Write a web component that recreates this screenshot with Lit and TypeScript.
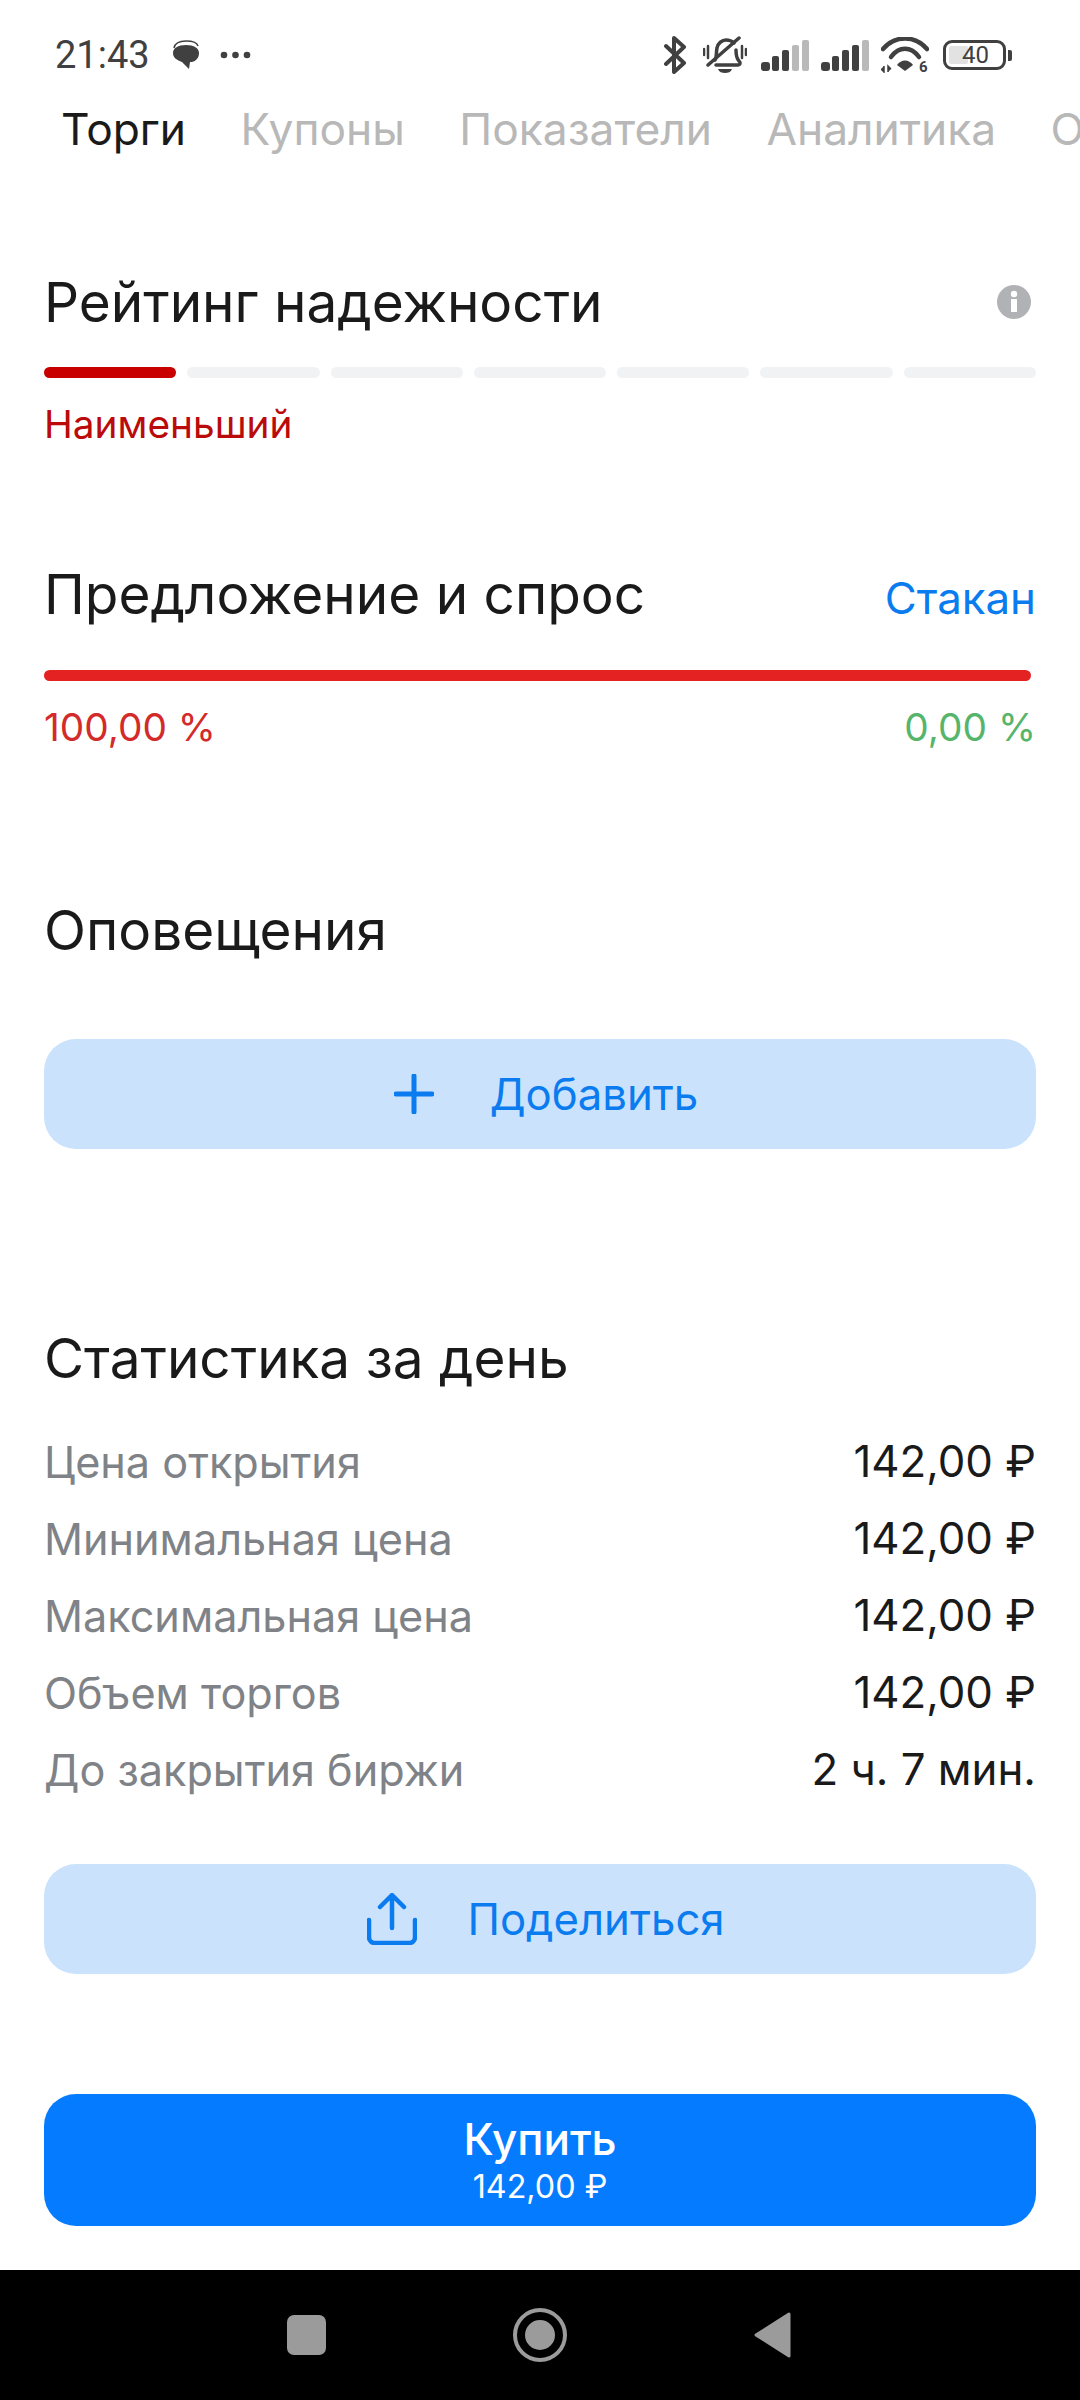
import { LitElement, html, css, svg } from "lit";
import { customElement } from "lit/decorators.js";

const stats = [
  ["Цена открытия", "142,00 ₽"],
  ["Минимальная цена", "142,00 ₽"],
  ["Максимальная цена", "142,00 ₽"],
  ["Объем торгов", "142,00 ₽"],
  ["До закрытия биржи", "2 ч. 7 мин."],
];
const signal = svg`
  <rect x="0" y="22" width="9" height="9" rx="3" fill="#404040"/>
  <rect x="11" y="16" width="7" height="15" rx="2" fill="#404040"/>
  <rect x="21" y="10" width="7" height="21" rx="2" fill="#404040"/>`;

@customElement("app-root")
export class AppRoot extends LitElement {
  static styles = css`
    :host { display: block; width: 1080px; height: 2400px; background: #fff; font-family: Inter, "Noto Sans", sans-serif; font-weight: 430; color: #1a1a1a; overflow: hidden; }
    .page { display: flex; flex-direction: column; height: 2400px; }
    .status { display: flex; align-items: center; justify-content: space-between; height: 38px; margin-top: 36px; padding: 0 68px 0 55px; color: #404040; }
    .status-left, .status-right { display: flex; align-items: center; }
    .time { font: 400 38px/38px Roboto, sans-serif; }
    .chat { margin-left: 22px; }
    .dots { margin-left: 20px; }
    .bt { margin-right: 16px; }
    .bell { margin-right: 14px; }
    .sig1 { margin-right: 12px; }
    .sig2 { margin-right: 12px; }
    .wifi-wrap { margin-right: 14px; }
    .battery { display: flex; align-items: center; gap: 2px; }
    .batt-body { position: relative; box-sizing: border-box; width: 63px; height: 30px; border: 3.5px solid #404040; border-radius: 9px; display: flex; align-items: center; justify-content: center; font: 400 24px/24px Roboto, sans-serif; color: #404040; padding-left: 2px; }
    .batt-fill { position: absolute; left: 3px; top: 3px; bottom: 3px; width: 19px; background: #e2e2e2; border-radius: 2px; }
    .batt-text { position: relative; }
    .batt-nub { width: 4px; height: 11px; background: #404040; border-radius: 0 2px 2px 0; }
    .tabs { display: flex; gap: 54.5px; height: 60px; margin-top: 25px; padding-left: 61px; font-size: 44.3px; line-height: 60px; color: #b8b8b8; white-space: nowrap; overflow: hidden; }
    .tabs .active { color: #1a1a1a; }
    .content { padding: 0 44px; display: flex; flex-direction: column; }
    .row { display: flex; justify-content: space-between; align-items: center; }
    .title { font-size: 54.9px; line-height: 70px; font-weight: 430; margin: 0; color: #1a1a1a; }
    .rating-title { margin-top: 108px; padding-right: 5px; }
    .bars { display: grid; grid-template-columns: repeat(7, 1fr); gap: 11px; margin-top: 30px; }
    .bar { height: 11px; border-radius: 6px; background: #f1f2f4; }
    .bar.on { background: #c80000; }
    .rating { margin-top: 26px; color: #bb0a0a; font-size: 38.8px; line-height: 40px; }
    .supply-title { margin-top: 115px; }
    .link { color: #0a7cf0; font-size: 43.8px; position: relative; top: 4px; }
    .demand { height: 11px; border-radius: 6px; background: #e52222; margin: 41px 5px 0 0; }
    .pct { margin-top: 26px; font-size: 38.8px; line-height: 40px; color: #d32a2a; }
    .pct .up { color: #57b56b; }
    .alerts-title { margin-top: 148px; }
    .btn { height: 110px; border-radius: 32px; background: #cae2fc; color: #0a7cf0; display: flex; align-items: center; justify-content: center; font-size: 43.7px; box-sizing: border-box; }
    .add { margin-top: 74px; gap: 56px; padding-left: 12px; }
    .stats-title { margin-top: 174px; }
    .stats { margin-top: 30px; display: flex; flex-direction: column; }
    .stat { height: 77px; font-size: 43.2px; font-weight: 420; color: #7f8387; }
    .stat b { font-weight: 430; font-size: 43.8px; color: #1a1a1a; }
    .share { margin-top: 56px; gap: 50px; padding-left: 12px; }
    .buy { margin-top: 120px; height: 132px; border-radius: 32px; background: #057bff; color: #fff; display: flex; flex-direction: column; align-items: center; justify-content: center; }
    .buy-l { font-size: 44px; line-height: 50px; font-weight: 500; }
    .buy-p { font-size: 32.3px; line-height: 40px; margin-top: 3px; }
    .nav { margin-top: auto; height: 130px; background: #000; display: flex; align-items: center; justify-content: center; }
    .nav-in { display: flex; align-items: center; width: 504px; justify-content: space-between; margin-left: -3px; }
    svg { display: block; flex: none; }
  `;

  render() {
    return html`
      <div class="page">
        <div class="status">
          <div class="status-left">
            <span class="time">21:43</span>
            <svg class="chat" width="28" height="30" viewBox="0 0 28 30">
              <path d="M2 8C3 3 8 1 14 1s11 1 12 5" fill="none" stroke="#404040" stroke-width="1.500"/>
              <path d="M14 5c8 0 13 3 13 8 0 5-3 8-7 9h-2l-1 7-7-7C5 20 1 18 1 13 1 8 6 5 14 5z" fill="#404040"/>
            </svg>
            <svg class="dots" width="31" height="8" viewBox="0 0 31 8"><circle cx="4" cy="4" r="3.300" fill="#404040"/><circle cx="15.500" cy="4" r="3.300" fill="#404040"/><circle cx="27" cy="4" r="3.300" fill="#404040"/></svg>
          </div>
          <div class="status-right">
            <svg class="bt" width="24" height="38" viewBox="0 0 24 38"><path d="M3 10 L21 27 L11 36 V2 L21 11 L3 28" fill="none" stroke="#404040" stroke-width="4" stroke-linecap="round" stroke-linejoin="round"/></svg>
            <svg class="bell" width="44" height="38" viewBox="0 0 44 38">
              <path d="M12 24c2-3 1-8 2-12 1-5 5-8 9-8 3 0 6 1 8 3M33 14c0 5 1 9 3 11 2 2 1 4-1 4H13" fill="none" stroke="#404040" stroke-width="3.500" stroke-linecap="round"/>
              <path d="M5 29 36 2" stroke="#404040" stroke-width="3.500" stroke-linecap="round"/>
              <path d="M15 33h14c-1 3-4 4-7 4s-6-1-7-4z" fill="#404040"/>
              <path d="M1 13v6M5 10v12M39 10v12M43 13v6" stroke="#404040" stroke-width="2.500" stroke-linecap="round"/>
            </svg>
            <svg class="sig1" width="48" height="31" viewBox="0 0 48 31">${signal}<rect x="31" y="5" width="7" height="26" rx="2" fill="#b9b9b9"/><rect x="41" y="0" width="7" height="31" rx="2" fill="#b9b9b9"/></svg>
            <svg class="sig2" width="48" height="31" viewBox="0 0 48 31">${signal}<rect x="31" y="5" width="7" height="26" rx="2" fill="#404040"/><rect x="41" y="0" width="7" height="31" rx="2" fill="#b9b9b9"/></svg>
            <svg class="wifi-wrap" width="48" height="36" viewBox="0 0 48 36">
              <path d="M2 12C14 -2 34 -2 46 12" fill="none" stroke="#404040" stroke-width="4.500" stroke-linecap="round"/>
              <path d="M10 20C18 9 30 9 38 20" fill="none" stroke="#404040" stroke-width="4.500" stroke-linecap="round"/>
              <path d="M16 28C20 22 28 22 32 28L24 34Z" fill="#404040"/>
              <path d="M3 29v6l-3-3M7 35v-6l3 3" fill="#404040" stroke="#404040" stroke-width="1.500"/>
              <text x="38" y="35" font-family="Roboto" font-weight="700" font-size="15" fill="#404040">6</text>
            </svg>
            <div class="battery">
              <div class="batt-body"><span class="batt-fill"></span><span class="batt-text">40</span></div>
              <span class="batt-nub"></span>
            </div>
          </div>
        </div>
        <div class="tabs">
          <span class="active">Торги</span><span>Купоны</span><span>Показатели</span><span>Аналитика</span><span>Описание</span>
        </div>
        <div class="content">
          <div class="row rating-title">
            <h2 class="title">Рейтинг надежности</h2>
            <svg width="34" height="34" viewBox="0 0 34 34"><circle cx="17" cy="17" r="17" fill="#b1b2b5"/><rect x="14" y="14" width="6" height="13" fill="#fff"/><circle cx="17" cy="9" r="3.200" fill="#fff"/></svg>
          </div>
          <div class="bars">
            ${[0, 1, 2, 3, 4, 5, 6].map((i) => html`<div class="bar ${i === 0 ? "on" : ""}"></div>`)}
          </div>
          <div class="rating">Наименьший</div>

          <div class="row supply-title">
            <h2 class="title">Предложение и спрос</h2>
            <span class="link">Стакан</span>
          </div>
          <div class="demand"></div>
          <div class="row pct"><span>100,00 %</span><span class="up">0,00 %</span></div>

          <h2 class="title alerts-title">Оповещения</h2>
          <div class="btn add">
            <svg width="40" height="40" viewBox="0 0 40 40"><path d="M20 2v36M2 20h36" stroke="#0a7cf0" stroke-width="5" stroke-linecap="round"/></svg>
            <span>Добавить</span>
          </div>

          <h2 class="title stats-title">Статистика за день</h2>
          <div class="stats">
            ${stats.map(([k, v]) => html`<div class="row stat"><span>${k}</span><b>${v}</b></div>`)}
          </div>
          <div class="btn share">
            <svg width="50" height="52" viewBox="0 0 50 52"><path d="M25 35V3M13 14 25 2l12 12M2 27v17c0 4 3 6 6 6h34c3 0 6-2 6-6V27" fill="none" stroke="#0a7cf0" stroke-width="4.500" stroke-linecap="round" stroke-linejoin="round"/></svg>
            <span>Поделиться</span>
          </div>
          <div class="buy"><span class="buy-l">Купить</span><span class="buy-p">142,00 ₽</span></div>
        </div>
        <div class="nav">
          <div class="nav-in">
            <svg width="39" height="40" viewBox="0 0 39 40"><rect width="39" height="40" rx="7" fill="#9b9b9b"/></svg>
            <svg width="54" height="54" viewBox="0 0 54 54"><circle cx="27" cy="27" r="25" fill="none" stroke="#9b9b9b" stroke-width="4"/><circle cx="27" cy="27" r="15" fill="#9b9b9b"/></svg>
            <svg width="37" height="46" viewBox="0 0 37 46"><path d="M35 2V44L2 23Z" fill="#9b9b9b" stroke="#9b9b9b" stroke-width="3" stroke-linejoin="round"/></svg>
          </div>
        </div>
      </div>
    `;
  }
}
